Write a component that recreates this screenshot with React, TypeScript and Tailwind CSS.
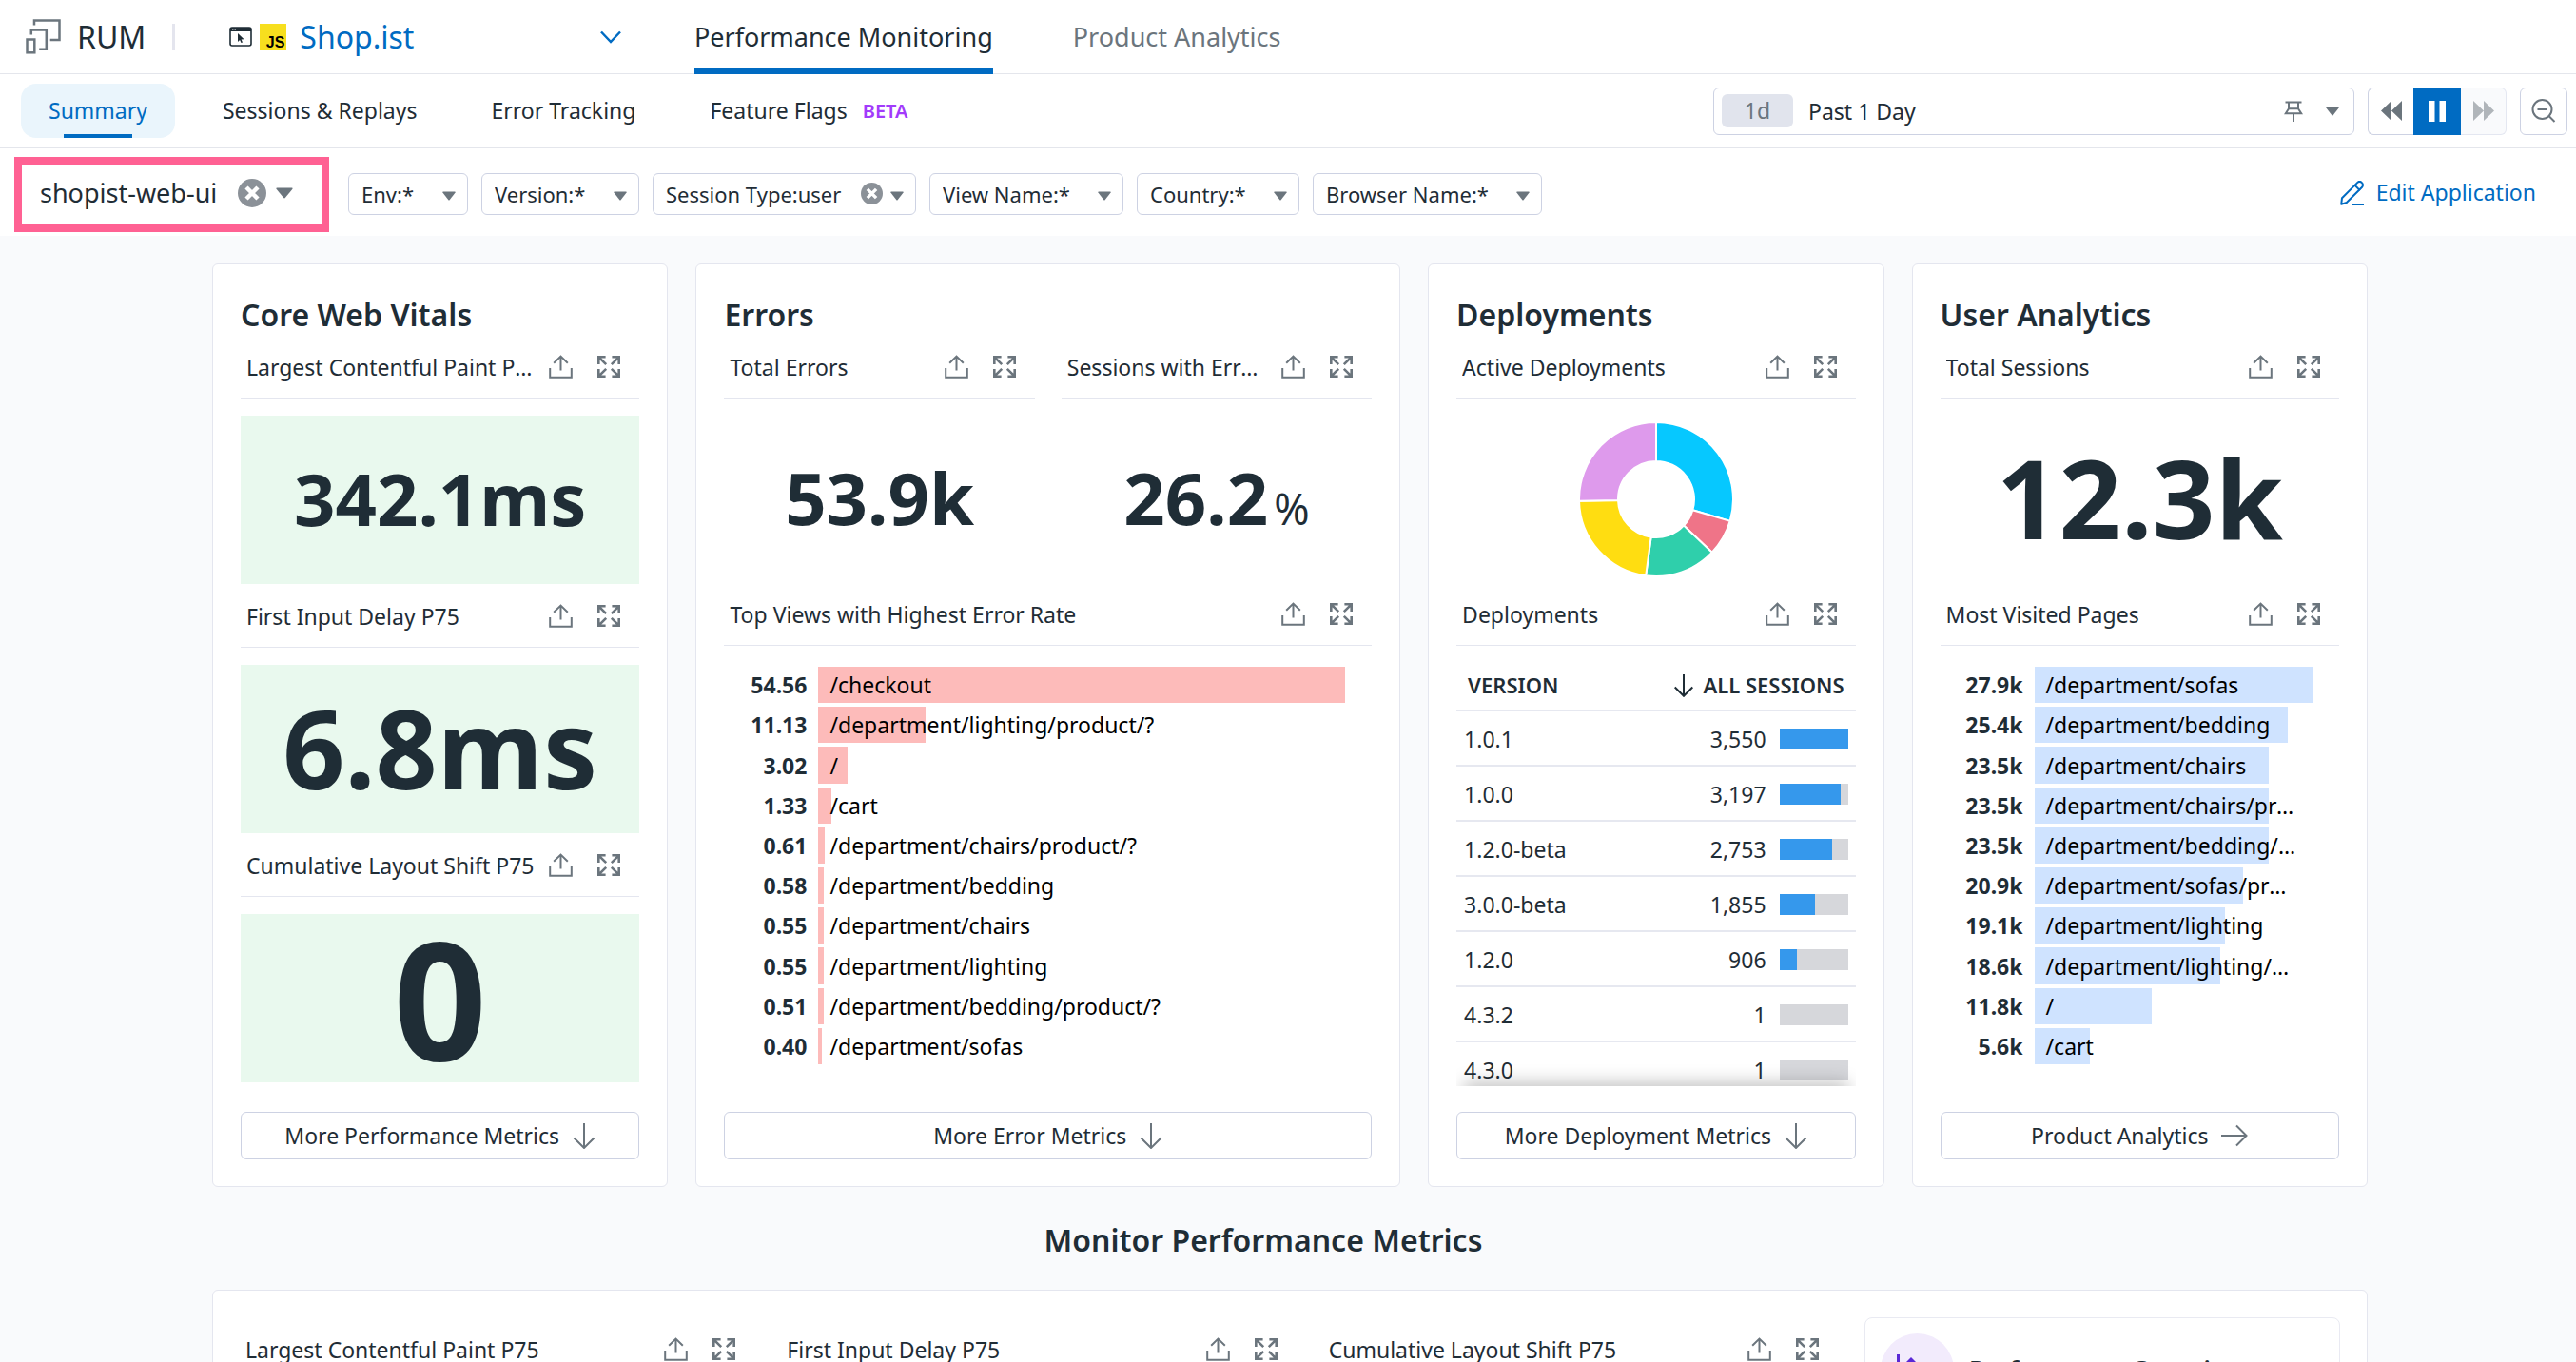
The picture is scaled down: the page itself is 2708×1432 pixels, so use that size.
import type { ReactNode } from "react";

const FONT = "font-['Noto_Sans',sans-serif]";

/* ---------- icons ---------- */

function UploadIcon() {
  return (
    <svg width="25" height="25" viewBox="0 0 25 25" fill="none" stroke="currentColor" strokeWidth="2" aria-hidden="true">
      <path d="M12.5 16.500V2M5.200 8.800 12.500 1.600l7.300 7.200M1.200 14v9.700h22.600V14" />
    </svg>
  );
}

function ExpandIcon() {
  return (
    <svg width="24" height="23" viewBox="0 0 24 23" fill="none" stroke="currentColor" strokeWidth="2.600" aria-hidden="true">
      <path d="M1.300 9V1.300h7.300M1.300 1.300l7.900 7.900" />
      <path d="M22.700 9V1.300h-7.300M22.700 1.300 14.800 9.200" />
      <path d="M1.300 14v7.700h7.300M1.300 21.700l7.900-7.900" />
      <path d="M22.700 14v7.700h-7.300M22.700 21.700l-7.900-7.900" />
    </svg>
  );
}

function Caret({ large = false }: { large?: boolean }) {
  return (
    <svg
      className="pointer-events-none shrink-0"
      width={large ? 18 : 14}
      height={large ? 12 : 10}
      viewBox="0 0 14 10"
      preserveAspectRatio="none"
      aria-hidden="true"
    >
      <path d="M1 .5h12q1 0 .6.900L7.800 9q-.8 1-1.600 0L.4 1.400Q0 .5 1 .5z" fill="#6b757d" />
    </svg>
  );
}

function ClearIcon({ size }: { size: number }) {
  return (
    <svg width={size} height={size} viewBox="0 0 30 30" aria-hidden="true">
      <circle cx="15" cy="15" r="15" fill="#8b9198" />
      <path d="M9 9l12 12M21 9 9 21" stroke="#fff" strokeWidth="4.500" />
    </svg>
  );
}

function ArrowDown() {
  return (
    <svg width="24" height="27" viewBox="0 0 24 27" fill="none" stroke="currentColor" strokeWidth="2" aria-hidden="true">
      <path d="M12 0v25.500M1.500 15.500 12 26l10.500-10.500" />
    </svg>
  );
}

function ArrowRight() {
  return (
    <svg width="28" height="24" viewBox="0 0 28 24" fill="none" stroke="currentColor" strokeWidth="2" aria-hidden="true">
      <path d="M0 12h26M16 1.500 26.500 12 16 22.500" />
    </svg>
  );
}

function RumIcon() {
  return (
    <svg width="38" height="37" viewBox="0 0 38 37" fill="none" stroke="#6b757d" strokeWidth="2.500" aria-hidden="true">
      <path d="M9 6.500V1.400h26.500V22h-9.800" />
      <path d="M5.800 16.500v-5h16v20.200h-7.600" />
      <rect x="1.500" y="21.500" width="7.800" height="13.800" />
    </svg>
  );
}

function BrowserIcon() {
  return (
    <svg width="24" height="21" viewBox="0 0 24 21" aria-hidden="true">
      <rect x="1" y="1" width="22" height="19" rx="2" fill="none" stroke="#1f2d36" strokeWidth="1.600" />
      <path d="M1 1h22v4H1z" fill="#1f2d36" />
      <path d="M3 2.800h1.500M5.500 2.800H7" stroke="#fff" strokeWidth="1.200" />
      <path d="M9 7l6.500 6.200-2.900.3 1.400 2.900-1.500.700-1.400-3L9 16z" fill="#1f2d36" />
    </svg>
  );
}

function ChevronDown() {
  return (
    <svg width="22" height="14" viewBox="0 0 22 14" fill="none" stroke="#006bc2" strokeWidth="2.500" aria-hidden="true">
      <path d="M1 1.500l10 10.500 10-10.500" />
    </svg>
  );
}

function PinIcon() {
  return (
    <svg className="pointer-events-none shrink-0" width="20" height="22" viewBox="0 0 20 22" fill="none" stroke="#6b757d" strokeWidth="2" aria-hidden="true">
      <path d="M1.500 1.500h17M5 1.500v6.800L1.800 13.300h16.400L15 8.300V1.500M5 8.300h10M10 13.300V22" />
    </svg>
  );
}

function RewindIcon() {
  return (
    <svg width="22" height="21" viewBox="0 0 22 21" fill="currentColor" aria-hidden="true">
      <path d="M11 0v21L0 10.500zM22 0v21L11 10.500z" />
    </svg>
  );
}

function ForwardIcon() {
  return (
    <svg width="22" height="21" viewBox="0 0 22 21" fill="currentColor" aria-hidden="true">
      <path d="M0 0v21l11-10.500zM11 0v21l11-10.500z" />
    </svg>
  );
}

function PauseIcon() {
  return (
    <svg width="20" height="22" viewBox="0 0 20 22" fill="#fff" aria-hidden="true">
      <path d="M1 0h6.500v22H1zM12.500 0H19v22h-6.500z" />
    </svg>
  );
}

function ZoomOutIcon() {
  return (
    <svg width="26" height="25" viewBox="0 0 26 25" fill="none" stroke="#6b757d" strokeWidth="2" aria-hidden="true">
      <circle cx="11.500" cy="11" r="10" />
      <path d="M6.500 11h10M18.500 18l6 6" />
    </svg>
  );
}

function PencilIcon() {
  return (
    <svg width="26" height="26" viewBox="0 0 26 26" fill="none" stroke="currentColor" strokeWidth="2" strokeLinejoin="round" aria-hidden="true">
      <path d="M1.200 24.800l.8-6.600L18.300 1.900c1.300-1.300 3.300-1.100 4.600.2s1.500 3.300.2 4.600L6.800 23z" />
      <path d="M15.500 4.800l5.300 5.300M12 25h13" />
    </svg>
  );
}

function InsightIcon() {
  return (
    <svg width="44" height="34" viewBox="0 0 44 34" fill="none" stroke="#5a28d6" strokeWidth="3" aria-hidden="true">
      <path d="M2.500 0v32H42" />
      <path d="M16 3l5 5-5 5-5-5z" fill="#5a28d6" stroke="none" />
      <path d="M8 24l8-14 10 12 12-10" />
    </svg>
  );
}

/* ---------- shared parts ---------- */

function WidgetHeader({ title }: { title: string }) {
  return (
    <header className="flex h-[67px] items-center gap-3 border-b border-[#e4e6ef] pr-5 pl-1.5">
      <h3 className="min-w-0 flex-1 truncate pt-0.5 text-[23px] leading-8">{title}</h3>
      <div className="flex items-center gap-[26px] text-[#6b757d]">
        <button type="button" aria-label={`Export ${title}`}>
          <UploadIcon />
        </button>
        <button type="button" aria-label={`Expand ${title}`}>
          <ExpandIcon />
        </button>
      </div>
    </header>
  );
}

function Card({ title, action, icon, children }: { title: string; action: string; icon: ReactNode; children: ReactNode }) {
  return (
    <section className="flex min-w-0 flex-col rounded-md border border-[#e4e6ef] bg-white px-[29px] pb-7">
      <h2 className="pt-[33px] pb-px text-[32px] leading-10 font-semibold">{title}</h2>
      {children}
      <button
        type="button"
        className="mt-auto flex h-[50px] items-center justify-center gap-3.5 rounded-md border border-[#cdd2e3] text-[23px]"
      >
        {action}
        <span className="text-[#6b757d]">{icon}</span>
      </button>
    </section>
  );
}

type VitalProps = { title: string; value: string; size: string };

function Vital({ title, value, size }: VitalProps) {
  return (
    <div>
      <WidgetHeader title={title} />
      <p className={`mt-[18px] flex h-[177px] items-center justify-center bg-[#e9f9ee] pb-1 leading-none font-bold ${size}`}>{value}</p>
    </div>
  );
}

function Stat({ title, children }: { title: string; children: ReactNode }) {
  return (
    <div className="min-w-0">
      <WidgetHeader title={title} />
      <div className="mt-[18px] flex h-[175px] items-center justify-center">{children}</div>
    </div>
  );
}

type Bar = { value: number; label: string; path: string };

function BarList({ bars, color, grid, end }: { bars: Bar[]; color: string; grid: string; end: string }) {
  const max = bars[0].value;
  return (
    <ul className={`mt-[22px] flex h-[418px] flex-col gap-1 text-[23px] ${end}`}>
      {bars.map((bar, i) => (
        <li key={i} className={`grid flex-1 items-center gap-3 ${grid}`}>
          <span className="text-right leading-8 font-bold">{bar.label}</span>
          <span className="relative flex h-full items-center">
            <span className={`absolute inset-y-0 left-0 ${color}`} style={{ width: `${(bar.value / max) * 100}%` }} />
            <span className="relative mr-3.5 truncate pl-3 leading-8 text-black">{bar.path}</span>
          </span>
        </li>
      ))}
    </ul>
  );
}

/* ---------- data ---------- */

const errorViews: Bar[] = [
  { value: 54.56, label: "54.56", path: "/checkout" },
  { value: 11.13, label: "11.13", path: "/department/lighting/product/?" },
  { value: 3.02, label: "3.02", path: "/" },
  { value: 1.33, label: "1.33", path: "/cart" },
  { value: 0.61, label: "0.61", path: "/department/chairs/product/?" },
  { value: 0.58, label: "0.58", path: "/department/bedding" },
  { value: 0.55, label: "0.55", path: "/department/chairs" },
  { value: 0.55, label: "0.55", path: "/department/lighting" },
  { value: 0.51, label: "0.51", path: "/department/bedding/product/?" },
  { value: 0.4, label: "0.40", path: "/department/sofas" },
];

const visitedPages: Bar[] = [
  { value: 27.9, label: "27.9k", path: "/department/sofas" },
  { value: 25.4, label: "25.4k", path: "/department/bedding" },
  { value: 23.5, label: "23.5k", path: "/department/chairs" },
  { value: 23.5, label: "23.5k", path: "/department/chairs/product/?" },
  { value: 23.5, label: "23.5k", path: "/department/bedding/product/?" },
  { value: 20.9, label: "20.9k", path: "/department/sofas/product/?" },
  { value: 19.1, label: "19.1k", path: "/department/lighting" },
  { value: 18.6, label: "18.6k", path: "/department/lighting/product/?" },
  { value: 11.8, label: "11.8k", path: "/" },
  { value: 5.6, label: "5.6k", path: "/cart" },
];

const versions = [
  { name: "1.0.1", sessions: 3550 },
  { name: "1.0.0", sessions: 3197 },
  { name: "1.2.0-beta", sessions: 2753 },
  { name: "3.0.0-beta", sessions: 1855 },
  { name: "1.2.0", sessions: 906 },
  { name: "4.3.2", sessions: 1 },
  { name: "4.3.0", sessions: 1 },
];

const slices = [
  { from: 0, to: 106.4, color: "#06c8ff" },
  { from: 106.4, to: 133.5, color: "#ef7488" },
  { from: 133.5, to: 187.7, color: "#2fcfab" },
  { from: 187.7, to: 268.7, color: "#ffdd11" },
  { from: 268.7, to: 360, color: "#de9aec" },
];

function point(angle: number, r: number) {
  const a = ((angle - 90) * Math.PI) / 180;
  return `${(81 + r * Math.cos(a)).toFixed(2)} ${(81 + r * Math.sin(a)).toFixed(2)}`;
}

function Donut() {
  return (
    <svg width="162" height="162" viewBox="0 0 162 162" role="img" aria-label="Active deployments by version">
      {slices.map((s) => (
        <path
          key={s.color}
          d={`M${point(s.from, 81)}A81 81 0 0 1 ${point(s.to, 81)}L${point(s.to, 40)}A40 40 0 0 0 ${point(s.from, 40)}Z`}
          fill={s.color}
          stroke="#fff"
          strokeWidth="2"
        />
      ))}
    </svg>
  );
}

function VersionTable() {
  return (
    <div className="relative mt-[18px] h-[445px] overflow-hidden">
      <table className="w-full border-collapse text-[23px]">
        <thead>
          <tr className="h-[50px] border-b-2 border-[#e6e8f0] text-[22px]">
            <th scope="col" className="pb-0.5 pl-3 text-left font-semibold">
              VERSION
            </th>
            <th scope="col" className="pr-3 pb-0.5 font-semibold">
              <span className="flex items-center justify-end gap-2.5">
                <svg width="20" height="24" viewBox="0 0 20 24" fill="none" stroke="currentColor" strokeWidth="2" aria-hidden="true">
                  <path d="M10 0v22.500M.7 13.500 10 22.800l9.300-9.300" />
                </svg>
                ALL SESSIONS
              </span>
            </th>
          </tr>
        </thead>
        <tbody>
          {versions.map((v) => (
            <tr key={v.name} className="h-[58px] border-b-2 border-[#e6e8f0]">
              <td className="pt-0.5 pl-2">{v.name}</td>
              <td className="pt-0.5 pr-2">
                <span className="flex items-center justify-end gap-3.5">
                  {v.sessions.toLocaleString("en-US")}
                  <span className="h-[22px] w-[72px] bg-[#d6d7db]">
                    <span className="block h-full bg-[#3598ec]" style={{ width: `${Math.floor((v.sessions / 3550) * 100)}%` }} />
                  </span>
                </span>
              </td>
            </tr>
          ))}
        </tbody>
      </table>
      <div className="absolute inset-x-3 -bottom-3 h-3 shadow-[0_0_18px_4px_rgba(0,0,0,0.25)]" />
    </div>
  );
}

function Filter({ name, value, clearable = false }: { name: string; value: string; clearable?: boolean }) {
  return (
    <div className="flex h-11 items-center rounded-md border border-[#cdd2e3] pr-3 pl-[13px]">
      <select aria-label={name} className="appearance-none bg-transparent text-[22px] leading-8">
        <option>{`${name}:${value}`}</option>
      </select>
      {clearable ? (
        <button type="button" aria-label={`Clear ${name}`} className="mr-2 ml-5">
          <ClearIcon size={23} />
        </button>
      ) : (
        <span className="w-[29px]" />
      )}
      <span className="pt-1">
        <Caret />
      </span>
    </div>
  );
}

function SubTab({ children }: { children: ReactNode }) {
  return (
    <a href="#" className="flex h-[57px] items-center px-7">
      {children}
    </a>
  );
}

/* ---------- page ---------- */

export default function App() {
  return (
    <div className={`h-screen overflow-hidden bg-[#f9fafc] text-[#1f2d36] ${FONT}`}>
      <div className="flex h-[78px] items-stretch border-b border-[#e4e6ec] bg-white">
        <div className="flex w-[688px] items-center border-r border-[#e4e6ec] pr-[34px] pl-[27px]">
          <RumIcon />
          <span className="ml-4 text-[32px]">RUM</span>
          <span className="ml-7 h-7 w-[3px] bg-[#e4e5ee]" />
          <button type="button" aria-haspopup="listbox" className="ml-[57px] flex flex-1 items-center text-[32px] text-[#006bc2]">
            <BrowserIcon />
            <span className="mr-3.5 ml-2 flex size-7 items-end justify-end bg-[#f7df1e] pr-0.5 font-['Liberation_Sans',sans-serif] text-[16px] leading-4 font-bold text-black">
              JS
            </span>
            Shop.ist
            <span className="ml-auto">
              <ChevronDown />
            </span>
          </button>
        </div>
        <nav aria-label="Products" className="-mb-px ml-[42px] flex gap-[84px] text-[27px]">
          <a href="#" aria-current="page" className="flex items-center border-b-[7px] border-[#006bc2] pt-[7px]">
            Performance Monitoring
          </a>
          <a href="#" className="flex items-center text-[#6b757d]">
            Product Analytics
          </a>
        </nav>
      </div>

      <div className="flex h-[78px] items-center border-b border-[#e4e6ec] bg-white pr-[9px] pl-[22px]">
        <nav aria-label="Sections" className="flex gap-[22px] text-[23px]">
          <a href="#" aria-current="page" className="flex h-[57px] flex-col items-center rounded-2xl bg-[#eaf5fc] px-[29px] text-[#006bc2]">
            <span className="flex flex-1 items-center pt-1">Summary</span>
            <span className="h-1 w-[72px] bg-[#006bc2]" />
          </a>
          <SubTab>Sessions &amp; Replays</SubTab>
          <SubTab>Error Tracking</SubTab>
          <SubTab>
            Feature Flags
            <span className="ml-4 text-[20px] font-semibold text-[#a23bfb]">BETA</span>
          </SubTab>
        </nav>
        <div className="ml-auto flex gap-3.5">
          <div className="flex h-[50px] w-[674px] items-center rounded-md border border-[#cdd2e3] pr-[15px] pl-2 text-[23px]">
            <span className="flex h-[35px] w-[75px] items-center justify-center rounded-md bg-[#e1e4ed] text-[#6b757d]">1d</span>
            <select aria-label="Time range" className="ml-4 flex-1 appearance-none bg-transparent leading-8">
              <option>Past 1 Day</option>
            </select>
            <PinIcon />
            <span className="w-6" />
            <Caret />
          </div>
          <div className="flex h-[50px] text-[#6b757d]">
            <button type="button" aria-label="Back" className="flex w-12 items-center justify-center rounded-l-md border border-r-0 border-[#cdd2e3]">
              <RewindIcon />
            </button>
            <button type="button" aria-label="Pause" className="flex w-[50px] items-center justify-center bg-[#006bc2]">
              <PauseIcon />
            </button>
            <button
              type="button"
              aria-label="Forward"
              disabled
              className="flex w-12 items-center justify-center rounded-r-md border border-l-0 border-[#e4e7f1] bg-[#f9fafc] text-[#b0b5ba]"
            >
              <ForwardIcon />
            </button>
          </div>
          <button type="button" aria-label="Zoom out" className="flex h-[50px] w-[50px] items-center justify-center rounded-md border border-[#cdd2e3]">
            <ZoomOutIcon />
          </button>
        </div>
      </div>

      <div className="flex h-[92px] items-center bg-white pt-[5px] pr-[42px] pl-[15px]">
        <div className="mr-5 flex h-[79px] w-[331px] items-center border-8 border-[#ff6193] pb-1 pl-[19px]">
          <select aria-label="Service" className="appearance-none bg-transparent text-[27px] leading-10">
            <option>shopist-web-ui</option>
          </select>
          <button type="button" aria-label="Clear service" className="mr-2.5 ml-[21px]">
            <ClearIcon size={30} />
          </button>
          <Caret large />
        </div>
        <div className="flex gap-3.5 pb-0.5">
          <Filter name="Env" value="*" />
          <Filter name="Version" value="*" />
          <Filter name="Session Type" value="user" clearable />
          <Filter name="View Name" value="*" />
          <Filter name="Country" value="*" />
          <Filter name="Browser Name" value="*" />
        </div>
        <a href="#" className="ml-auto flex items-center gap-3 pb-1 text-[23px] text-[#006bc2]">
          <PencilIcon />
          Edit Application
        </a>
      </div>

      <main className="pt-[29px] pl-1">
        <div className="mx-auto max-w-[2266px]">
          <div className="grid grid-cols-[479fr_740fr_479fr_479fr] gap-[29px]">
            <Card title="Core Web Vitals" action="More Performance Metrics" icon={<ArrowDown />}>
              <div className="mb-[31px]">
                <Vital title="Largest Contentful Paint P75" value="342.1ms" size="text-[76px]" />
                <Vital title="First Input Delay P75" value="6.8ms" size="text-[114px]" />
                <Vital title="Cumulative Layout Shift P75" value="0" size="text-[172px]" />
              </div>
            </Card>

            <Card title="Errors" action="More Error Metrics" icon={<ArrowDown />}>
              <div className="grid grid-cols-2 gap-7">
                <Stat title="Total Errors">
                  <span className="pb-1 text-[76px] leading-none font-bold">53.9k</span>
                </Stat>
                <Stat title="Sessions with Errors">
                  <span className="flex items-baseline gap-1.5 pb-1 text-[76px] leading-none font-bold">
                    26.2<span className="text-[45px] font-normal">%</span>
                  </span>
                </Stat>
              </div>
              <WidgetHeader title="Top Views with Highest Error Rate" />
              <BarList bars={errorViews} color="bg-[#fdbbba]" grid="grid-cols-[87px_1fr]" end="pr-7" />
            </Card>

            <Card title="Deployments" action="More Deployment Metrics" icon={<ArrowDown />}>
              <Stat title="Active Deployments">
                <Donut />
              </Stat>
              <WidgetHeader title="Deployments" />
              <VersionTable />
            </Card>

            <Card title="User Analytics" action="Product Analytics" icon={<ArrowRight />}>
              <Stat title="Total Sessions">
                <span className="pb-1 text-[115px] leading-none font-bold">12.3k</span>
              </Stat>
              <WidgetHeader title="Most Visited Pages" />
              <BarList bars={visitedPages} color="bg-[#cfe3ff]" grid="grid-cols-[87px_minmax(0,1fr)]" end="pr-7" />
            </Card>
          </div>

          <h2 className="pt-[35px] pr-14 pb-[31px] text-center text-[32px] leading-[42px] font-semibold">Monitor Performance Metrics</h2>

          <section className="grid grid-cols-[1fr_1fr_1fr_500px] gap-7 rounded-md border border-[#e4e6ef] bg-white p-7">
            <WidgetHeader title="Largest Contentful Paint P75" />
            <WidgetHeader title="First Input Delay P75" />
            <WidgetHeader title="Cumulative Layout Shift P75" />
            <a href="#" className="flex items-center gap-4 rounded-lg border border-[#e9eaf2] p-4">
              <span className="flex size-[77px] items-center justify-center rounded-full bg-[#f2ebfc]">
                <InsightIcon />
              </span>
              <span className="pb-0.5 text-[26px] font-semibold">Performance Overview</span>
            </a>
          </section>
        </div>
      </main>
    </div>
  );
}
